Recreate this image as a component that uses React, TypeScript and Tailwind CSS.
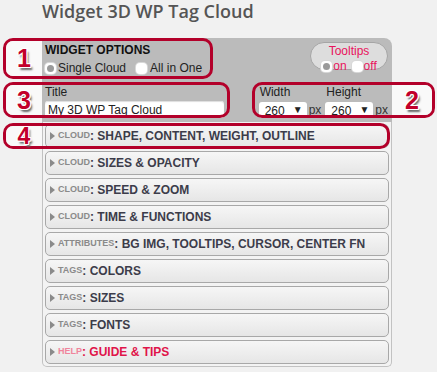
import React from "react";

const sans = "font-['Liberation_Sans',Arial,sans-serif]";

const sections: { group: string; title: string; help?: boolean }[] = [
  { group: "cloud", title: "SHAPE, CONTENT, WEIGHT, OUTLINE" },
  { group: "cloud", title: "SIZES & OPACITY" },
  { group: "cloud", title: "SPEED & ZOOM" },
  { group: "cloud", title: "TIME & FUNCTIONS" },
  { group: "attributes", title: "BG IMG, TOOLTIPS, CURSOR, CENTER FN" },
  { group: "tags", title: "COLORS" },
  { group: "tags", title: "SIZES" },
  { group: "tags", title: "FONTS" },
  { group: "help", title: "GUIDE & TIPS", help: true },
];

function Radio({ checked }: { checked?: boolean }) {
  return (
    <span className="w-[11px] h-[11px] bg-white rounded-[4px] flex items-center justify-center shadow-[0_0_0_1px_#d8d8d8]">
      {checked && <span className="w-[7px] h-[7px] rounded-full bg-[#9a9a9a]" />}
    </span>
  );
}

function Select({ value }: { value: string }) {
  return (
    <div className="w-[48px] h-[16px] bg-white rounded-[3px] flex items-center justify-between pl-[6px] pr-[4px] text-[12px] text-[#222]">
      <span className="leading-none mt-[1px]">{value}</span>
      <span className="text-[10px] leading-none">▼</span>
    </div>
  );
}

function Marker({ n, small }: { n: string; small?: boolean }) {
  return (
    <span
      className={
        "font-bold text-[#c2002a] leading-none [text-shadow:1px_1px_0_#fff,-1px_-1px_0_#fff,1px_-1px_0_#fff,-1px_1px_0_#fff,0_1px_0_#fff,1px_0_0_#fff,2px_3px_2px_#666] " +
        (small ? "text-[23px]" : "text-[25px]")
      }
    >
      {n}
    </span>
  );
}

export default function App() {
  return (
    <div className={"relative w-[437px] h-[372px] bg-[#f1f1f1] overflow-hidden " + sans}>
      <h2 className="pl-[42px] h-[22px] leading-[22px] text-[18px] font-semibold text-[#555] font-['Open_Sans',sans-serif] mb-[16px]">
        Widget 3D WP Tag Cloud
      </h2>

      <div className="ml-[42px] w-[350px]">
        <div className="bg-[#bbbbbb] rounded-tr-[8px] pl-[3px] pr-[4px]">
          <div className="flex justify-between h-[42px] pt-[4px]">
            <div className="flex flex-col">
              <span className="text-[12px] leading-[14px] font-bold text-[#111] mt-[1px]">WIDGET OPTIONS</span>
              <div className="flex items-center mt-[4px] text-[12px] leading-[14px] text-[#222]">
                <Radio checked />
                <span className="ml-[2px]">Single Cloud</span>
                <span className="ml-[10px]" />
                <Radio />
                <span className="ml-[3px]">All in One</span>
              </div>
            </div>
            <div className="w-[78px] h-[28px] rounded-full bg-[#dddddd] border border-[#a5a5a5] flex flex-col items-center text-[12px] leading-[14px] text-[#e8135c]">
              <span className="mt-[1px]">Tooltips</span>
              <div className="flex items-center mt-[1px]">
                <Radio checked />
                <span className="ml-[1px]">on</span>
                <span className="ml-[5px]" />
                <Radio />
                <span className="ml-[1px]">off</span>
              </div>
            </div>
          </div>

          <div className="flex justify-between h-[42px] pt-[4px]">
            <div className="flex flex-col w-[179px]">
              <span className="text-[12px] leading-[14px] text-[#222] mt-[1px]">Title</span>
              <div className="mt-[2px] h-[17px] bg-white rounded-[3px] shadow-[inset_0_1px_1px_#ddd] flex items-center pl-[3px] text-[12px] text-[#222]">
                My 3D WP Tag Cloud
              </div>
            </div>
            <div className="flex gap-[4px] text-[12px] leading-[14px] text-[#222]">
              <div className="flex flex-col">
                <span className="ml-[1px] mt-[1px]">Width</span>
                <div className="flex items-center mt-[3px]">
                  <Select value="260" />
                  <span className="ml-[2px] text-[#333]">px</span>
                </div>
              </div>
              <div className="flex flex-col">
                <span className="ml-[1px] mt-[1px]">Height</span>
                <div className="flex items-center mt-[3px]">
                  <Select value="260" />
                  <span className="ml-[2px] text-[#333]">px</span>
                </div>
              </div>
            </div>
          </div>
        </div>

        <div className="bg-[#f3f3f3] border-x border-b border-[#c2c2c2] rounded-b-[5px] px-[2px] pt-[2px] pb-[2px] flex flex-col gap-[3px]">
          {sections.map((s) => (
            <div
              key={s.group + s.title}
              className="h-[24px] border border-[#a8a8a8] rounded-[5px] bg-linear-to-b from-[#f6f6f6] via-[#eeeeee] to-[#e6e6e6] flex items-center pl-[4px] font-bold"
            >
              <svg width="5" height="8" viewBox="0 0 5 8" className="mr-[3px]">
                <path d="M0 0 L5 4 L0 8z" fill="#8a8a8a" />
              </svg>
              <span className={"text-[9px] uppercase " + (s.help ? "text-[#f0849c]" : "text-[#8a8a8a]")}>
                {s.group}
              </span>
              <span className={"text-[12px] " + (s.help ? "text-[#e0144a]" : "text-[#3c3c4a]")}>
                :&nbsp;{s.title}
              </span>
            </div>
          ))}
        </div>
      </div>

      {/* annotation boxes */}
      <div className="absolute left-[3px] top-[38px] w-[210px] h-[41px] border-[3px] border-[#b3002a] rounded-[10px] flex">
        <div className="w-[36px] h-full bg-[#f9f9f9] rounded-l-[7px] flex items-center justify-center">
          <Marker n="1" />
        </div>
      </div>
      <div className="absolute left-[3px] top-[82px] w-[227px] h-[36px] border-[3px] border-[#b3002a] rounded-[10px] flex">
        <div className="w-[36px] h-full bg-[#f9f9f9] rounded-l-[7px] flex items-center justify-center">
          <Marker n="3" />
        </div>
      </div>
      <div className="absolute left-[252px] top-[82px] w-[183px] h-[36px] border-[3px] border-[#b3002a] rounded-[10px] flex justify-end">
        <div className="w-[40px] h-full bg-[#f9f9f9] rounded-r-[7px] flex items-center justify-center">
          <Marker n="2" />
        </div>
      </div>
      <div className="absolute left-[3px] top-[123px] w-[387px] h-[26px] border-[3px] border-[#b3002a] rounded-[10px] flex">
        <div className="w-[36px] h-full bg-[#f9f9f9] rounded-l-[7px] flex items-center justify-center">
          <Marker n="4" small />
        </div>
      </div>
    </div>
  );
}
